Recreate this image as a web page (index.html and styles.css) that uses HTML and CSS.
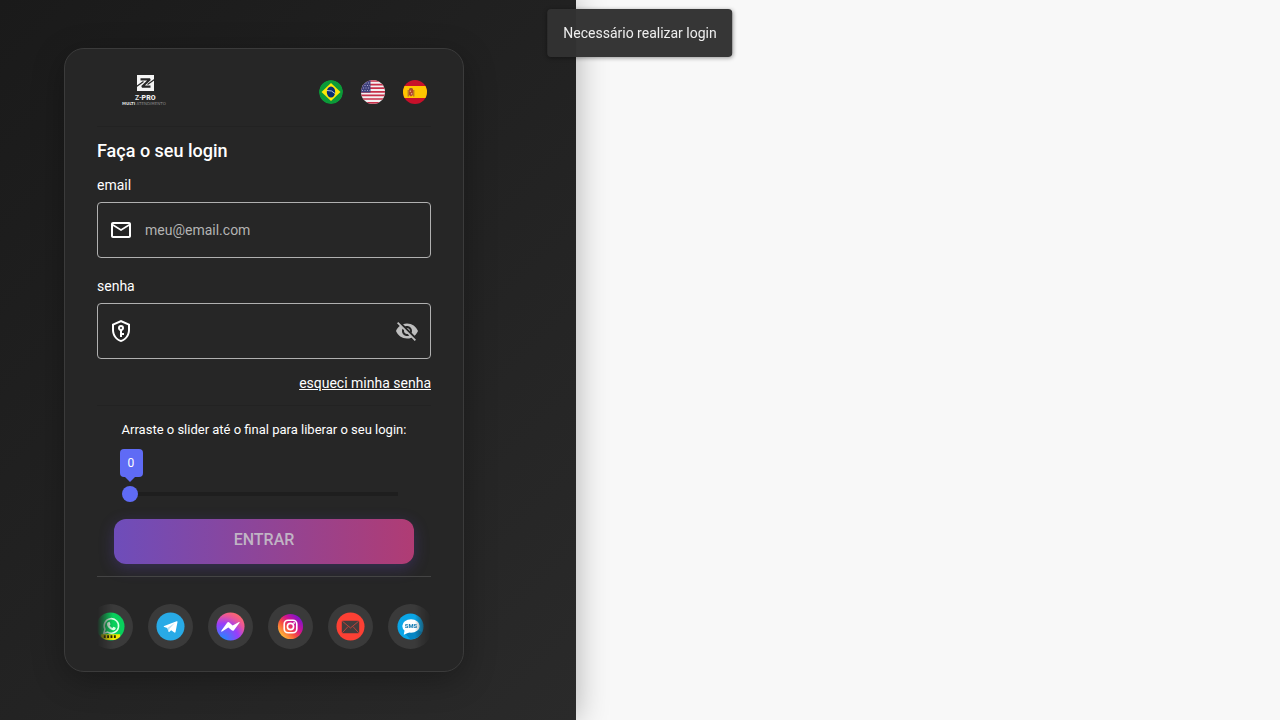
FILE: index.html
```html
<!DOCTYPE html>
<html lang="pt-BR">
<head>
    <meta charset="UTF-8">
    <meta name="viewport" content="width=device-width, initial-scale=1.0">
    <title>Z-PRO - Login</title>
    <link rel="stylesheet" href="styles.css">
</head>
<body>

    <div class="toast" role="alert">Necessário realizar login</div>

    <main class="login-panel">
        <form class="login-card">
            <header class="card-header">
                <svg class="logo" viewBox="0 0 96 54" role="img" aria-label="Z-PRO">
                    <path fill="#f5f5f5" d="M40 10h17v16H40z"/>
                    <path fill="none" stroke="#262626" stroke-width="2.200" stroke-linejoin="bevel" d="M43.500 14.300H53L45 21.700h8.500"/>
                    <path fill="none" stroke="#262626" stroke-width="1.200" d="M39.500 21.500l7-5M57.500 14.500l-7 5"/>
                    <text class="logo-name" x="38" y="35">Z-<tspan font-weight="900">PRO</tspan></text>
                    <text class="logo-tag" x="25" y="40"><tspan fill="#ddd" font-weight="700">MULTI</tspan> ATENDIMENTO</text>
                </svg>
                <nav class="languages">
                    <button type="button" class="flag" aria-label="Português">
                        <svg viewBox="0 0 24 24">
                            <circle cx="12" cy="12" r="12" fill="#0b9a38"/>
                            <path fill="#fde809" d="M12 3l9.500 9-9.500 9-9.500-9z"/>
                            <ellipse cx="12" cy="12" rx="4.200" ry="5.500" fill="#0b2d72"/>
                            <path fill="none" stroke="#dfe6ee" stroke-width=".8" d="M8 10.500q5-.5 8 3"/>
                        </svg>
                    </button>
                    <button type="button" class="flag" aria-label="English">
                        <svg viewBox="0 0 24 24">
                            <path fill="#f4f0f2" d="M0 0h24v24H0z"/>
                            <path stroke="#c8304a" stroke-width="1.700" d="M0 1h24M0 4.600h24M0 8.200h24M0 11.800h24M0 15.400h24M0 19h24M0 22.800h24"/>
                            <path fill="#40417c" d="M0 0h9.500v12.500H0z"/>
                            <path stroke="#a9a9ca" stroke-dasharray="1 1.500" d="M2 3h7M1 5.500h8M2 8h7M1 10.500h8"/>
                        </svg>
                    </button>
                    <button type="button" class="flag" aria-label="Español">
                        <svg viewBox="0 0 24 24">
                            <path fill="#c8102a" d="M0 0h24v24H0z"/>
                            <path fill="#ffc500" d="M0 6h24v12H0z"/>
                            <path fill="#b5452a" d="M6 9h4v6l-2 1.500L6 15z"/>
                            <path stroke="#9a5a30" d="M5.200 10v6.500M10.800 10v6.500M6.500 8.500h3"/>
                            <path fill="#e9b49a" d="M6.800 10.500h1v1.500h-1zM8.200 13h1v1.500h-1z"/>
                        </svg>
                    </button>
                </nav>
            </header>
            <hr class="divider">

            <h1>Faça o seu login</h1>

            <label class="field-label" for="email">email</label>
            <div class="field">
                <svg class="icon" viewBox="0 0 24 24"><path d="M22 6C22 4.900 21.100 4 20 4H4C2.900 4 2 4.900 2 6V18C2 19.100 2.900 20 4 20H20C21.100 20 22 19.100 22 18V6M20 6L12 11L4 6H20M20 18H4V8L12 13L20 8V18Z"/></svg>
                <input type="email" id="email" placeholder="meu@email.com">
            </div>

            <label class="field-label" for="senha">senha</label>
            <div class="field">
                <svg class="icon" viewBox="0 0 24 24"><path d="M21,11C21,16.550 17.160,21.740 12,23C6.840,21.740 3,16.550 3,11V5L12,1L21,5V11M12,21C15.750,20 19,15.540 19,11.220V6.300L12,3.180L5,6.300V11.220C5,15.540 8.250,20 12,21M12,6A3,3 0 0,1 15,9C15,10.310 14.170,11.420 13,11.830V14H15V16H13V18H11V11.830C9.830,11.420 9,10.310 9,9A3,3 0 0,1 12,6M12,8A1,1 0 0,0 11,9A1,1 0 0,0 12,10A1,1 0 0,0 13,9A1,1 0 0,0 12,8Z"/></svg>
                <input type="password" id="senha">
                <button type="button" class="toggle-password" aria-label="Mostrar senha">
                    <svg class="icon" viewBox="0 0 24 24"><path d="M12 7c2.760 0 5 2.240 5 5 0 .65-.13 1.260-.36 1.830l2.920 2.920c1.510-1.260 2.700-2.890 3.430-4.750-1.730-4.390-6-7.500-11-7.500-1.400 0-2.740.25-3.980.7l2.160 2.160C10.740 7.130 11.350 7 12 7zM2 4.270l2.280 2.280.46.46C3.080 8.300 1.780 10.020 1 12c1.730 4.390 6 7.500 11 7.500 1.550 0 3.030-.3 4.380-.84l.42.42L19.730 22 21 20.730 3.270 3 2 4.270zM7.530 9.800l1.550 1.550c-.05.21-.08.43-.08.65 0 1.660 1.340 3 3 3 .22 0 .44-.03.65-.08l1.550 1.550c-.67.33-1.410.53-2.200.53-2.760 0-5-2.240-5-5 0-.79.2-1.530.53-2.200zm4.310-.78l3.150 3.150.02-.16c0-1.660-1.340-3-3-3l-.17.01z"/></svg>
                </button>
            </div>

            <a class="forgot" href="#">esqueci minha senha</a>
            <hr class="divider">

            <div class="unlock">
                <label for="unlock">Arraste o slider até o final para liberar o seu login:</label>
                <div class="slider">
                    <output class="bubble" for="unlock">0</output>
                    <input type="range" id="unlock" min="0" max="100" value="0">
                </div>
            </div>

            <button type="submit" class="submit" disabled>ENTRAR</button>
            <hr class="divider light">

            <div class="channels">
                <span class="channel">
                    <svg viewBox="0 0 30 30">
                        <defs><clipPath id="round"><circle cx="15" cy="15" r="14.500"/></clipPath></defs>
                        <g clip-path="url(#round)">
                            <path fill="#08cf5c" d="M0 0h30v30H0z"/>
                            <path fill="none" stroke="#d9ffe6" stroke-width="1.600" d="M8 22l1.200-4.200A7.500 7.500 0 1 1 12 20.800z"/>
                            <path fill="#d9ffe6" d="M12.500 10.500l1.500-.3 1 2.500-.9 1.200q1 1.800 2.800 2.600l1.200-1.200 2.300 1.100c.2 2-1.400 2.800-3 2.400-3.500-.8-6-3.800-6.100-6.200 0-1 .5-1.700 1.200-2.100z"/>
                            <path fill="#f2e800" d="M5 23h20v6H5z"/>
                            <path stroke="#262600" stroke-width="3" stroke-dasharray="2 1.500" d="M8 25.500h14"/>
                        </g>
                    </svg>
                </span>
                <span class="channel">
                    <svg viewBox="0 0 30 30">
                        <circle cx="15" cy="15" r="14.500" fill="#28aae6"/>
                        <path fill="#fff" d="M21.300 9.500L8.500 14.500c-.8.400-.7.800 0 1.100l3.200 1 1.300 3.800c.3.400.6.400 1 .1l1.700-1.700 3.300 2.500c.6.300 1 .1 1.200-.6l2-10.200c.2-.9-.3-1.200-.9-1z"/>
                        <path fill="#b9dff3" d="M11.700 16.600l8-5.400-5.800 6-.5 3.300z"/>
                    </svg>
                </span>
                <span class="channel">
                    <svg viewBox="0 0 30 30">
                        <defs>
                            <radialGradient id="messenger" cx="20%" cy="100%" r="110%">
                                <stop offset="0" stop-color="#1690ff"/>
                                <stop offset=".55" stop-color="#9a3dfa"/>
                                <stop offset=".8" stop-color="#e8559c"/>
                                <stop offset="1" stop-color="#ff6968"/>
                            </radialGradient>
                        </defs>
                        <circle cx="15" cy="15" r="14.500" fill="url(#messenger)"/>
                        <path fill="#fff" d="M5.500 19.500l6-8.500q1-1.200 2.300-.2l3.400 3.200 6.600-3.600q1-.3.500.7l-5.700 7.700q-1 1.200-2.400.2L12.800 16l-6.500 4.300q-1.300.3-.8-.8z"/>
                    </svg>
                </span>
                <span class="channel">
                    <svg viewBox="0 0 30 30">
                        <defs>
                            <linearGradient id="instagram" x1="0" y1="1" x2="1" y2="0">
                                <stop offset=".1" stop-color="#ffc938"/>
                                <stop offset=".4" stop-color="#f7503c"/>
                                <stop offset=".6" stop-color="#d3138e"/>
                                <stop offset=".9" stop-color="#7014d8"/>
                            </linearGradient>
                        </defs>
                        <circle cx="15" cy="15" r="13" fill="url(#instagram)"/>
                        <g fill="none" stroke="#fff" stroke-width="1.700">
                            <rect x="8.500" y="8.500" width="13" height="13" rx="4"/>
                            <circle cx="15" cy="15" r="3.200"/>
                        </g>
                        <circle cx="18.700" cy="11.300" r=".9" fill="#fff"/>
                    </svg>
                </span>
                <span class="channel">
                    <svg viewBox="0 0 30 30">
                        <circle cx="15" cy="15" r="14.500" fill="#fc4034"/>
                        <rect x="6" y="9" width="18" height="13" rx="1" fill="#443c3c"/>
                        <path fill="none" stroke="#e04438" stroke-width=".8" d="M6.500 9.500l8.500 7 8.500-7M6.500 21.500l6-6.500M23.500 21.500l-6-6.500"/>
                    </svg>
                </span>
                <span class="channel">
                    <svg viewBox="0 0 30 30">
                        <circle cx="15" cy="15" r="13.500" fill="#0aa5e6"/>
                        <path fill="#0786c4" d="M9 22l14-3 4 2q-4 7-12 7.500z"/>
                        <ellipse cx="15.500" cy="14.500" rx="9" ry="7" fill="#fff"/>
                        <path fill="#fff" d="M9 18l-1 5.500 6-2.500z"/>
                        <text class="sms" x="15.500" y="17" text-anchor="middle">SMS</text>
                    </svg>
                </span>
            </div>
        </form>
    </main>

    <script>
        const slider = document.getElementById('unlock');
        const bubble = document.querySelector('.bubble');
        const submit = document.querySelector('.submit');

        slider.addEventListener('input', () => {
            bubble.textContent = slider.value;
            submit.disabled = slider.value < 100;
        });
    </script>
</body>
</html>
```

FILE: styles.css
```css
* {
    box-sizing: border-box;
}
body {
    margin: 0;
    font-family: Roboto, "Liberation Sans", sans-serif;
    font-size: 14px;
    line-height: 20px;
    background-color: #f8f8f8;
    color: #fff;
}
button,
input {
    font: inherit;
    color: inherit;
}
.toast {
    position: fixed;
    top: 9px;
    left: 50%;
    transform: translateX(-50%);
    z-index: 10;
    padding: 14px 16px;
    border-radius: 4px;
    background-color: rgba(50, 50, 50, 0.98);
    color: #eee;
    box-shadow: 0 1px 4px rgba(0, 0, 0, 0.4);
    white-space: nowrap;
}
.login-panel {
    display: flex;
    align-items: center;
    width: 45%;
    min-width: 464px;
    min-height: 100vh;
    padding: 24px 64px;
    background: linear-gradient(135deg, #1a1a1a, #2a2a2a);
    box-shadow: 0 0 30px rgba(0, 0, 0, 0.3);
}
.login-card {
    display: flex;
    flex-direction: column;
    width: 100%;
    max-width: 400px;
    padding: 16px 32px 22px;
    border: 1px solid #3b3b3b;
    border-radius: 20px;
    background-color: #262626;
    box-shadow: 0 8px 32px rgba(0, 0, 0, 0.3);
}
.card-header {
    display: flex;
    align-items: center;
    justify-content: space-between;
    padding-right: 4px;
    margin-bottom: 7px;
}
.logo {
    width: 96px;
    height: 54px;
}
.logo-name {
    font-size: 7px;
    font-weight: 500;
    fill: #eee;
}
.logo-tag {
    font-family: "DejaVu Sans", sans-serif;
    font-size: 4px;
    fill: #888;
}
.languages {
    display: flex;
    gap: 18px;
}
.flag {
    width: 24px;
    height: 24px;
    padding: 0;
    border: 0;
    border-radius: 50%;
    background: none;
    overflow: hidden;
    cursor: pointer;
}
.flag svg,
.channel svg {
    display: block;
    width: 100%;
}
.divider {
    width: 100%;
    height: 1px;
    margin: 0;
    border: 0;
    background-color: #222;
}
.divider.light {
    background-color: #444;
}
h1 {
    margin: 12px 0;
    font-size: 18px;
    font-weight: 500;
    line-height: 24px;
}
.field-label {
    margin-bottom: 7px;
}
.field {
    display: flex;
    align-items: center;
    gap: 12px;
    height: 56px;
    padding: 0 11px;
    border: 1px solid #b0b0b0;
    border-radius: 4px;
}
.field + .field-label {
    margin-top: 18px;
}
.field input {
    flex: 1;
    min-width: 0;
    padding: 0;
    border: 0;
    outline: 0;
    background: none;
}
.field input::placeholder {
    color: #b3b3b3;
}
.icon {
    display: block;
    flex: none;
    width: 24px;
    height: 24px;
    fill: #fff;
}
.toggle-password {
    padding: 0;
    border: 0;
    background: none;
    cursor: pointer;
}
.toggle-password .icon {
    fill: #bebebe;
}
.forgot {
    align-self: flex-end;
    margin: 14px 0 12px;
    color: #fff;
}
.unlock {
    align-self: center;
    padding: 14px 0 17px;
    font-size: 13px;
}
.slider {
    position: relative;
    padding-top: 46px;
}
.slider input {
    display: block;
    width: 100%;
    height: 16px;
    margin: 0;
    appearance: none;
    background: none;
}
.slider input::-webkit-slider-runnable-track {
    height: 4px;
    background: linear-gradient(to right, transparent 8px, #1e1e1e 8px, #1e1e1e calc(100% - 8px), transparent calc(100% - 8px));
}
.slider input::-webkit-slider-thumb {
    appearance: none;
    width: 16px;
    height: 16px;
    margin-top: -6px;
    border-radius: 50%;
    background-color: #5f6bf5;
}
.bubble {
    position: absolute;
    left: -2px;
    bottom: 25px;
    min-width: 23px;
    padding: 4px 8px;
    border-radius: 4px;
    background-color: #5f6bf5;
    font-size: 12px;
}
.bubble::after {
    content: "";
    position: absolute;
    top: 100%;
    left: 5px;
    border: 5px solid transparent;
    border-top-color: #5f6bf5;
    border-bottom: 0;
}
.submit {
    align-self: center;
    width: 100%;
    max-width: 300px;
    height: 45px;
    margin-bottom: 12px;
    padding: 0 0 3px;
    border: 0;
    border-radius: 12px;
    background: linear-gradient(to right, #6e4dba, #b03c74);
    box-shadow: 0 4px 15px rgba(100, 70, 200, 0.3);
    color: #c0b4c4;
    font-size: 16px;
    font-weight: 500;
}
.channels {
    display: flex;
    gap: 15px;
    padding-top: 27px;
    overflow: hidden;
    -webkit-mask-image: linear-gradient(to right, transparent, #000 16px, #000 calc(100% - 16px), transparent);
    mask-image: linear-gradient(to right, transparent, #000 16px, #000 calc(100% - 16px), transparent);
}
.channel {
    flex: none;
    width: 45px;
    height: 45px;
    padding: 8px;
    border-radius: 50%;
    background-color: #3a3a3a;
}
.channel:first-child {
    margin-left: -9px;
}
.sms {
    font-size: 6px;
    font-weight: 900;
    fill: #1b7fb5;
}
```
